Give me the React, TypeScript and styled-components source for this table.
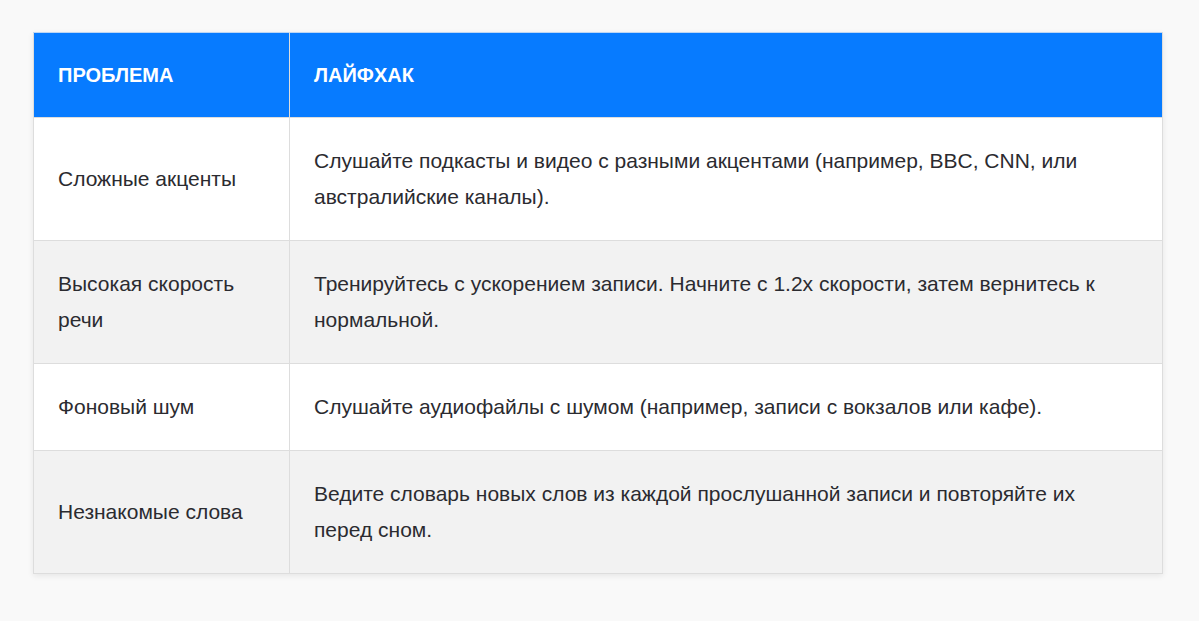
import React from "react";
import styled, { createGlobalStyle } from "styled-components";

const Global = createGlobalStyle`
  html, body { margin: 0; padding: 0; background: #f9f9f9; }
  body { font-family: "Liberation Sans", Arial, sans-serif; }
`;

const Page = styled.div`
  padding: 32px 36px 40px 33px;
`;

const Table = styled.table`
  width: 100%;
  border-collapse: collapse;
  background: #ffffff;
  border: 1px solid #dddddd;
  box-shadow: 0 2px 6px rgba(0, 0, 0, 0.08);
  font-size: 21px;
  line-height: 36px;
  color: #2b2b30;
`;

const HeadCell = styled.th`
  background: #077bff;
  color: #ffffff;
  font-size: 20px;
  font-weight: bold;
  text-align: left;
  text-transform: uppercase;
  padding: 24px;
  border: 1px solid #dddddd;
  border-top-color: #bcd6f5;
`;

const Row = styled.tr<{ $alt: boolean }>`
  background: ${(p) => (p.$alt ? "#f2f2f2" : "#ffffff")};
`;

const Cell = styled.td<{ $narrow?: boolean }>`
  padding: 25px 24px;
  border: 1px solid #dddddd;
  vertical-align: middle;
  width: ${(p) => (p.$narrow ? "207px" : "auto")};
`;

const rows = [
  ["Сложные акценты", "Слушайте подкасты и видео с разными акцентами (например, BBC, CNN, или австралийские каналы)."],
  ["Высокая скорость речи", "Тренируйтесь с ускорением записи. Начните с 1.2x скорости, затем вернитесь к нормальной."],
  ["Фоновый шум", "Слушайте аудиофайлы с шумом (например, записи с вокзалов или кафе)."],
  ["Незнакомые слова", "Ведите словарь новых слов из каждой прослушанной записи и повторяйте их перед сном."],
];

export default function App() {
  return (
    <>
      <Global />
      <Page>
        <Table>
          <thead>
            <tr>
              <HeadCell>Проблема</HeadCell>
              <HeadCell>Лайфхак</HeadCell>
            </tr>
          </thead>
          <tbody>
            {rows.map((r, i) => (
              <Row key={i} $alt={i % 2 === 1}>
                <Cell $narrow>{r[0]}</Cell>
                <Cell>{r[1]}</Cell>
              </Row>
            ))}
          </tbody>
        </Table>
      </Page>
    </>
  );
}
